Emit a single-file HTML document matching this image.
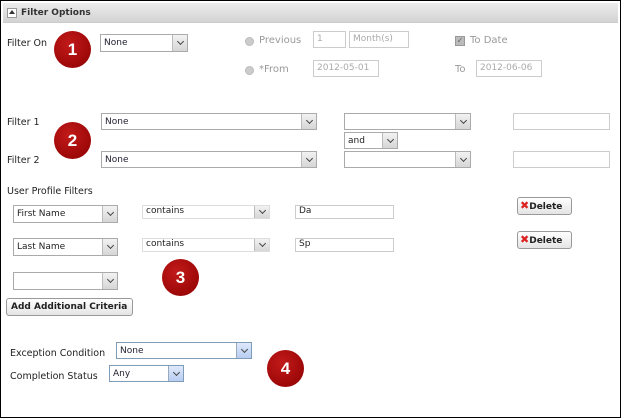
<!DOCTYPE html>
<html><head><style>
body{margin:0;width:621px;height:418px;background:#fff;font-family:"DejaVu Sans","Liberation Sans",sans-serif;font-size:9.5px;color:#222;position:relative;overflow:hidden}
.frame{position:absolute;left:0;top:0;width:619px;height:416px;border:1px solid #000}
.a{position:absolute;white-space:nowrap}
.sel{position:absolute;border:1px solid #aaa;background:#fff;box-sizing:border-box;font-size:9px;padding:3px 3px 0;color:#223}
.sel:after{content:"";position:absolute;right:0;top:0;bottom:0;width:14px;background:linear-gradient(#f2f2f2,#d6d6d6);border-left:1px solid #bbb}
.sel i{position:absolute;right:4px;top:50%;width:4px;height:4px;border-right:1.5px solid #444;border-bottom:1.5px solid #444;transform:rotate(45deg);z-index:2;margin-top:-4px}
.inp{position:absolute;border:1px solid #ccc;box-sizing:border-box;background:#fff;font-size:9px;color:#aaa;padding:2px 3px}
.c{position:absolute;width:37px;height:37px;border-radius:50%;background:radial-gradient(circle at 40% 35%,#c21a1a,#8e0000);color:#fff;font:bold 17px "Liberation Sans",sans-serif;text-align:center;line-height:37px}
.btn{position:absolute;border:1px solid #999;border-radius:3px;background:linear-gradient(#fff,#e4e4e4);font-weight:bold;font-size:9px;box-sizing:border-box;padding:3px 4px;color:#222}
.blue{border-color:#7f9db9}
.blue:after{background:linear-gradient(#dfe9fb,#b8cdf2);border-left:1px solid #9ab}
.dot{position:absolute;width:9px;height:9px;border-radius:50%;background:#ccc;border:1px solid #bbb;box-sizing:border-box}
.g{color:#999}
</style></head><body>
<div class="frame"></div>
<div class="a" style="left:3px;top:3px;width:615px;height:19px;background:linear-gradient(#ececec,#d3d3d3);border-bottom:1px solid #ccc"></div>
<div class="a" style="left:7px;top:8px;width:10px;height:10px;border:1px solid #999;background:#fff;box-sizing:border-box"></div>
<div class="a" style="left:9px;top:10px;width:0;height:0;border-left:3px solid transparent;border-right:3px solid transparent;border-bottom:4px solid #333"></div>
<div class="a" style="left:21px;top:8px;font-weight:bold;font-size:9px;color:#333">Filter Options</div>

<div class="a" style="left:7px;top:38px">Filter On</div>
<div class="sel" style="left:100px;top:34px;width:88px;height:18px">None<i></i></div>
<div class="c" style="left:54px;top:31px">1</div>

<div class="dot" style="left:245px;top:37px"></div><div class="a g" style="left:259px;top:35px;font-size:10px">Previous</div>
<div class="inp" style="left:313px;top:31px;width:33px;height:17px">1</div>
<div class="inp" style="left:349px;top:31px;width:60px;height:17px">Month(s)</div>
<div class="a" style="left:455px;top:36px;width:10px;height:10px;background:#bbb;border:1px solid #999;box-sizing:border-box;color:#666;font-size:8px;line-height:8px;text-align:center">✓</div>
<div class="a g" style="left:470px;top:35px;font-size:10px">To Date</div>
<div class="dot" style="left:245px;top:66px"></div><div class="a g" style="left:259px;top:64px;font-size:10px">*From</div>
<div class="inp" style="left:313px;top:60px;width:66px;height:17px">2012-05-01</div>
<div class="a g" style="left:455px;top:64px;font-size:10px">To</div>
<div class="inp" style="left:476px;top:60px;width:66px;height:17px">2012-06-06</div>

<div class="a" style="left:7px;top:117px">Filter 1</div>
<div class="sel" style="left:101px;top:113px;width:216px;height:17px">None<i></i></div>
<div class="sel" style="left:344px;top:113px;width:127px;height:17px"><i></i></div>
<div class="inp" style="left:513px;top:113px;width:97px;height:17px"></div>
<div class="sel" style="left:344px;top:132px;width:54px;height:17px;color:#222">and<i></i></div>
<div class="a" style="left:7px;top:155px">Filter 2</div>
<div class="sel" style="left:101px;top:151px;width:216px;height:17px">None<i></i></div>
<div class="sel" style="left:344px;top:151px;width:127px;height:17px"><i></i></div>
<div class="inp" style="left:513px;top:151px;width:97px;height:17px"></div>
<div class="c" style="left:54px;top:122px">2</div>

<div class="a" style="left:7px;top:186px">User Profile Filters</div>
<div class="sel" style="left:13px;top:205px;width:105px;height:18px;color:#222">First Name<i></i></div>
<div class="sel" style="left:142px;top:205px;width:128px;height:14px;padding-top:0;border-color:#ddd;color:#222">contains<i></i></div>
<div class="inp" style="left:295px;top:205px;width:99px;height:14px;padding-top:0;color:#222">Da</div>
<div class="btn" style="left:517px;top:197px;width:55px;height:18px;padding-left:2px"><span style="color:#d22;font-size:11px;line-height:9px">✖</span>Delete</div>
<div class="sel" style="left:13px;top:238px;width:105px;height:18px;color:#222">Last Name<i></i></div>
<div class="sel" style="left:142px;top:238px;width:128px;height:14px;padding-top:0;border-color:#ddd;color:#222">contains<i></i></div>
<div class="inp" style="left:295px;top:238px;width:99px;height:14px;padding-top:0;color:#222">Sp</div>
<div class="btn" style="left:517px;top:231px;width:55px;height:18px;padding-left:2px"><span style="color:#d22;font-size:11px;line-height:9px">✖</span>Delete</div>
<div class="sel" style="left:13px;top:272px;width:105px;height:18px"><i></i></div>
<div class="c" style="left:162px;top:259px">3</div>
<div class="btn" style="left:6px;top:298px;width:127px;height:18px">Add Additional Criteria</div>

<div class="a" style="left:10px;top:348px">Exception Condition</div>
<div class="sel blue" style="left:116px;top:342px;width:136px;height:17px">None<i></i></div>
<div class="a" style="left:10px;top:371px">Completion Status</div>
<div class="sel blue" style="left:109px;top:365px;width:75px;height:17px">Any<i></i></div>
<div class="c" style="left:267px;top:350px">4</div>
</body></html>
